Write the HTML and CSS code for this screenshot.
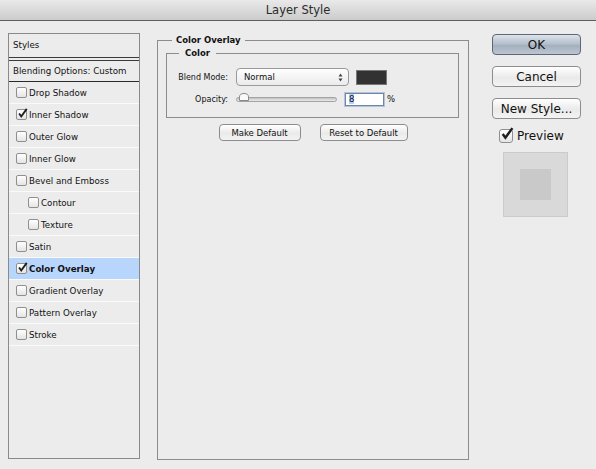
FILE: index.html
```html
<!DOCTYPE html>
<html lang="en">
<head>
  <meta charset="UTF-8" />
  <title>Layer Style</title>
  <link rel="stylesheet" href="styles.css">
</head>
<body>
  <div class="titlebar">Layer Style</div>
  <div class="dialog">
    <!-- Effects list -->
    <div class="sidebar">
      <div class="side-head">Styles</div>
      <div class="side-blend">Blending Options: Custom</div>
      <ul class="fx-list">
        <li><span class="cb"></span>Drop Shadow</li>
        <li><span class="cb"><svg class="tick" viewBox="0 0 13 13"><path d="M2.5 6.5 L5 10 L11.5 1"/></svg></span>Inner Shadow</li>
        <li><span class="cb"></span>Outer Glow</li>
        <li><span class="cb"></span>Inner Glow</li>
        <li><span class="cb"></span>Bevel and Emboss</li>
        <li class="sub"><span class="cb"></span>Contour</li>
        <li class="sub"><span class="cb"></span>Texture</li>
        <li><span class="cb"></span>Satin</li>
        <li class="active"><span class="cb"><svg class="tick" viewBox="0 0 13 13"><path d="M2.5 6.5 L5 10 L11.5 1"/></svg></span>Color Overlay</li>
        <li><span class="cb"></span>Gradient Overlay</li>
        <li><span class="cb"></span>Pattern Overlay</li>
        <li><span class="cb"></span>Stroke</li>
      </ul>
    </div>

    <!-- Settings -->
    <fieldset class="group outer">
      <legend>Color Overlay</legend>
      <fieldset class="group inner">
        <legend>Color</legend>
        <div class="row">
          <span class="lbl">Blend Mode:</span>
          <div class="select">
            <span>Normal</span>
            <svg class="arrows" viewBox="0 0 5 9"><path d="M0.5 3.5 L2.5 0.5 L4.5 3.5 Z M0.5 5.5 L2.5 8.5 L4.5 5.5 Z"/></svg>
          </div>
          <span class="swatch"></span>
        </div>
        <div class="row">
          <span class="lbl">Opacity:</span>
          <div class="slider">
            <svg class="thumb" viewBox="0 0 12 10"><path d="M1.5 8.5 L1.5 5 Q1.5 1.5 6 1.5 Q10.5 1.5 10.5 5 L10.5 8.5 Z"/></svg>
          </div>
          <span class="num"><span class="sel">8</span></span>
          <span class="pct">%</span>
        </div>
      </fieldset>
      <div class="btn-row">
        <button class="btn sm make">Make Default</button>
        <button class="btn sm reset">Reset to Default</button>
      </div>
    </fieldset>

    <!-- Dialog actions -->
    <div class="actions">
      <button class="btn big default">OK</button>
      <button class="btn big">Cancel</button>
      <button class="btn big">New Style...</button>
      <div class="preview">
        <span class="cb cb-big"><svg class="tick" viewBox="0 0 13 13"><path d="M2.5 6.5 L5 10 L11.5 1"/></svg></span>Preview
      </div>
      <div class="preview-box"><div class="preview-inner"></div></div>
    </div>
  </div>
</body>
</html>
```

FILE: styles.css
```css
/* Reset */
* {
  margin: 0;
  padding: 0;
  box-sizing: border-box;
}

body {
  width: 596px;
  height: 469px;
  background: #ececec;
  font-family: "DejaVu Sans", Verdana, sans-serif;
  color: #111;
  overflow: hidden;
}

/* Window title */
.titlebar {
  height: 21px;
  border-bottom: 1px solid #5e5e5e;
  background: linear-gradient(#e9e9e9, #cbcbcb);
  text-align: center;
  font-size: 11.5px;
  line-height: 20px;
  color: #2b2b2b;
}

.dialog {
  display: flex;
  align-items: flex-start;
}

/* Left list */
.sidebar {
  width: 132px;
  height: 426px;
  margin: 12px 0 0 8px;
  border: 1px solid #8a8a8a;
  font-size: 8.7px;
}
.side-head {
  height: 24px;
  line-height: 22px;
  padding-left: 4px;
  border-bottom: 1px solid #3a3a3a;
}
.side-blend {
  height: 22px;
  margin-top: 2px;
  line-height: 20px;
  padding-left: 4px;
  border-top: 1px solid #3a3a3a;
  border-bottom: 1px solid #2a2a2a;
}
.fx-list {
  list-style: none;
}
.fx-list li {
  display: flex;
  align-items: center;
  height: 22px;
  padding-left: 7px;
  border-bottom: 1px solid #fafafa;
}
.fx-list li.sub {
  padding-left: 19px;
}
.fx-list li.active {
  background: #b8d5fc;
  font-weight: bold;
}

/* Checkboxes */
.cb {
  position: relative;
  display: inline-block;
  flex: none;
  width: 11px;
  height: 11px;
  margin-right: 2px;
  border: 1px solid #8f8f8f;
  border-radius: 2px;
  background: linear-gradient(#fff, #e4e4e4);
}
.cb-big {
  width: 14px;
  height: 14px;
  margin-right: 4px;
  border-radius: 3px;
}
.tick {
  position: absolute;
  left: 0;
  top: -2px;
  width: 11px;
  height: 11px;
  fill: none;
  stroke: #1e1e1e;
  stroke-width: 2.2;
}
.cb-big .tick {
  width: 14px;
  height: 14px;
  top: -3px;
}

/* Group boxes */
.group {
  border: 1px solid #8c8c8c;
}
.group legend {
  font-size: 8.5px;
  font-weight: bold;
  line-height: 12px;
}
.outer {
  width: 312px;
  height: 426px;
  margin: 13px 0 0 17px;
}
.outer > legend {
  margin-left: 14px;
  padding: 0 4px;
}
.inner {
  width: 293px;
  margin: 1px 0 0 8px;
  padding: 9px 0 9px 9px;
}
.inner > legend {
  margin-left: 3px;
  padding: 0 6px;
}

.row {
  display: flex;
  align-items: center;
  height: 18px;
  font-size: 8.5px;
}
.row + .row {
  margin-top: 4px;
}
.lbl {
  flex: none;
  width: 52px;
  margin-right: 8px;
  font-size: 8px;
  text-align: right;
  white-space: nowrap;
}
.select {
  display: flex;
  align-items: center;
  justify-content: space-between;
  width: 113px;
  height: 18px;
  padding: 0 5px 0 7px;
  border: 1px solid #9a9a9a;
  border-radius: 4px;
  background: linear-gradient(#fefefe, #ebebeb);
}
.arrows {
  width: 5px;
  height: 9px;
  fill: #444;
}
.swatch {
  width: 31px;
  height: 15px;
  margin-left: 7px;
  background: #323232;
  border: 1px solid #777;
}
.slider {
  position: relative;
  width: 101px;
  height: 5px;
  border: 1px solid #a3a3a3;
  border-radius: 3px;
  background: linear-gradient(#c2c2c2, #ebebeb);
}
.thumb {
  position: absolute;
  left: 1px;
  top: -6px;
  width: 12px;
  height: 10px;
  fill: #fafafa;
  stroke: #8a8a8a;
  stroke-width: 1;
}
.num {
  display: inline-block;
  width: 39px;
  height: 13px;
  margin-left: 8px;
  padding-left: 3px;
  line-height: 11px;
  background: #fff;
  border: 1px solid #6f86a9;
  box-shadow: 0 0 0 1px #b3c3da;
}
.sel {
  background: #b3d3fd;
}
.pct {
  margin-left: 3px;
}

/* Buttons */
.btn {
  font-family: inherit;
  color: #111;
  border: 1px solid #8d8d8d;
  border-radius: 4px;
  background: linear-gradient(#ffffff, #eaeaea 55%, #f3f3f3);
}
.btn-row {
  display: flex;
  justify-content: center;
  gap: 19px;
  margin-top: 6px;
}
.sm {
  height: 17px;
  font-size: 8.5px;
}
.make { width: 82px; }
.reset { width: 88px; }

.actions {
  display: flex;
  flex-direction: column;
  width: 89px;
  margin: 13px 0 0 23px;
}
.big {
  height: 21px;
  font-size: 12px;
}
.big + .big {
  margin-top: 11px;
}
.default {
  border-color: #5d6776;
  background: linear-gradient(#dde3ea, #b1bcc9 50%, #a2aebd 52%, #bcc6d1);
}
.preview {
  display: flex;
  align-items: center;
  height: 17px;
  margin: 8px 0 0 7px;
  font-size: 12px;
}
.preview-box {
  display: flex;
  align-items: center;
  justify-content: center;
  width: 65px;
  height: 65px;
  margin: 8px 0 0 11px;
  background: #d9d9d9;
  border: 1px solid #cbcbcb;
}
.preview-inner {
  width: 31px;
  height: 31px;
  background: #c9c9c9;
}
```
